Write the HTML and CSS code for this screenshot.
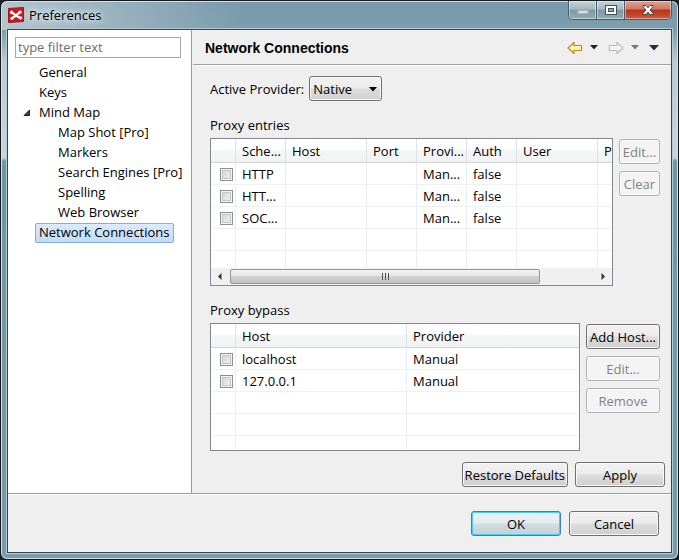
FILE: index.html
```html
<!DOCTYPE html>
<html lang="en">
<head>
<meta charset="utf-8">
<title>Preferences</title>
<link rel="stylesheet" href="styles.css">
</head>
<body>
<div class="window">
  <header class="titlebar">
    <svg class="logo" width="16" height="16" viewBox="0 0 16 16" aria-hidden="true">
      <path d="M0.500 1.500L15.500 0.500V14.500L0.500 15.500z" fill="#c8191e" stroke="#a81418"/>
      <path d="M2 5.500C5 5 6.500 7.500 8 8.500S11 11.500 14 10.500M2.500 11.500C5 11.500 6.500 9.500 8 8.500S10.500 5 13.500 5" fill="none" stroke="#fff" stroke-width="2.400"/>
      <path d="M3.500 3.500l1 2M11.500 3.500l0 2M4.500 13l0-2.500M12.500 12.500l-1-2" stroke="#fff" stroke-width="1.400"/>
    </svg>
    <h1 class="caption">Preferences</h1>
    <div class="controls">
      <button class="ctl" aria-label="Minimize" disabled><svg width="12" height="12" viewBox="0 0 12 12"><rect x="1" y="6.500" width="10" height="3" fill="#d9dfe2" stroke="#aab4b9"/></svg></button>
      <button class="ctl" aria-label="Maximize"><svg width="14" height="12" viewBox="0 0 14 12"><rect x="1.500" y="1.500" width="11" height="9" fill="#fff" stroke="#43505f"/><rect x="4.500" y="4.500" width="5" height="3" fill="#8faab7" stroke="#43505f"/></svg></button>
      <button class="ctl ctl-close" aria-label="Close"><svg width="14" height="12" viewBox="0 0 14 12"><path d="M2 1.500h3L7 3.800l2-2.300h3v1L9 6l3 3.500v1H9L7 8.200l-2 2.300H2v-1L5 6 2 2.500z" fill="#fff" stroke="#4a4450"/></svg></button>
    </div>
  </header>
  <main class="client">
    <div class="panes">
      <nav class="sidebar" aria-label="Preference pages">
        <input class="filter" type="text" placeholder="type filter text" aria-label="Filter">
        <ul class="tree">
          <li><a href="#">General</a></li>
          <li><a href="#">Keys</a></li>
          <li class="open">
            <svg class="twisty" width="8" height="8" viewBox="0 0 8 8" aria-hidden="true"><path d="M6.500 1v5.500H1z" fill="#404040" stroke="#202020"/></svg>
            <a href="#">Mind Map</a>
            <ul class="subtree">
              <li><a href="#">Map Shot [Pro]</a></li>
              <li><a href="#">Markers</a></li>
              <li><a href="#">Search Engines [Pro]</a></li>
              <li><a href="#">Spelling</a></li>
              <li><a href="#">Web Browser</a></li>
            </ul>
          </li>
          <li><a class="selected" href="#" aria-current="page">Network Connections</a></li>
        </ul>
      </nav>
      <section class="page">
        <div class="page-head">
          <h2>Network Connections</h2>
          <div class="tools">
            <button class="tool" aria-label="Back"><svg width="16" height="14" viewBox="0 0 16 14"><path d="M1 7l6-5.500v3h7.500v5H7v3z" fill="#fff3b8" stroke="#c08a10" stroke-width="1.200" stroke-linejoin="round"/></svg></button>
            <button class="tool" aria-label="Back history"><svg width="8" height="5" viewBox="0 0 8 5"><path d="M0 0h8L4 4.500z" fill="#222"/></svg></button>
            <button class="tool" aria-label="Forward"><svg width="16" height="14" viewBox="0 0 16 14"><path d="M15 7l-6-5.500v3H1.500v5H9v3z" fill="#f4f4f2" stroke="#bcbcba" stroke-width="1.200" stroke-linejoin="round"/></svg></button>
            <button class="tool" aria-label="Forward history"><svg width="8" height="5" viewBox="0 0 8 5"><path d="M0 0h8L4 4.500z" fill="#777"/></svg></button>
            <button class="tool" aria-label="Menu"><svg width="10" height="6" viewBox="0 0 10 6"><path d="M0 0h10L5 5.500z" fill="#2d2850"/></svg></button>
          </div>
        </div>
        <div class="page-body">
          <div class="provider">
            <label for="provider">Active Provider:</label>
            <span class="select"><select id="provider"><option>Native</option><option>Direct</option><option>Manual</option></select><svg width="8" height="5" viewBox="0 0 8 5" aria-hidden="true"><path d="M0 0h8L4 4.500z" fill="#000"/></svg></span>
          </div>
          <h3>Proxy entries</h3>
          <div class="group">
            <div class="grid entries">
              <div class="scroller">
              <table>
                <colgroup><col class="c-check"><col class="c-s"><col class="c-l"><col class="c-s"><col class="c-s"><col class="c-s"><col class="c-l"><col class="c-l"></colgroup>
                <thead><tr><th></th><th>Sche...</th><th>Host</th><th>Port</th><th>Provi...</th><th>Auth</th><th>User</th><th>P</th></tr></thead>
                <tbody>
                  <tr><td><input type="checkbox" aria-label="HTTP"></td><td>HTTP</td><td></td><td></td><td>Man...</td><td>false</td><td></td><td></td></tr>
                  <tr><td><input type="checkbox" aria-label="HTTPS"></td><td>HTT...</td><td></td><td></td><td>Man...</td><td>false</td><td></td><td></td></tr>
                  <tr><td><input type="checkbox" aria-label="SOCKS"></td><td>SOC...</td><td></td><td></td><td>Man...</td><td>false</td><td></td><td></td></tr>
                  <tr><td></td><td></td><td></td><td></td><td></td><td></td><td></td><td></td></tr>
                  <tr class="partial"><td></td><td></td><td></td><td></td><td></td><td></td><td></td><td></td></tr>
                </tbody>
              </table>
              </div>
              <div class="hscroll" aria-hidden="true">
                <svg width="17" height="17" viewBox="0 0 17 17"><path d="M10.500 5v7L7 8.500z" fill="#333"/></svg>
                <div class="track"><div class="thumb"><i></i><i></i><i></i></div></div>
                <svg width="17" height="17" viewBox="0 0 17 17"><path d="M6.500 5v7L10 8.500z" fill="#333"/></svg>
              </div>
            </div>
            <div class="stack narrow">
              <button class="btn" disabled>Edit...</button>
              <button class="btn" disabled>Clear</button>
            </div>
          </div>
          <h3>Proxy bypass</h3>
          <div class="group">
            <div class="grid">
              <table>
                <colgroup><col class="c-check"><col class="c-host"><col></colgroup>
                <thead><tr><th></th><th>Host</th><th>Provider</th></tr></thead>
                <tbody>
                  <tr><td><input type="checkbox" aria-label="localhost"></td><td>localhost</td><td>Manual</td></tr>
                  <tr><td><input type="checkbox" aria-label="127.0.0.1"></td><td>127.0.0.1</td><td>Manual</td></tr>
                  <tr><td></td><td></td><td></td></tr>
                  <tr><td></td><td></td><td></td></tr>
                  <tr class="partial short"><td></td><td></td><td></td></tr>
                </tbody>
              </table>
            </div>
            <div class="stack">
              <button class="btn">Add Host...</button>
              <button class="btn" disabled>Edit...</button>
              <button class="btn" disabled>Remove</button>
            </div>
          </div>
        </div>
        <div class="page-actions">
          <button class="btn restore">Restore Defaults</button>
          <button class="btn wide">Apply</button>
        </div>
      </section>
    </div>
    <footer class="dialog-actions">
      <button class="btn wide default">OK</button>
      <button class="btn wide">Cancel</button>
    </footer>
  </main>
</div>
</body>
</html>
```

FILE: styles.css
```css
* { box-sizing: border-box; }

html { background: #1c2226; }

body {
  margin: 0;
  font: 13px/20px "Open Sans", "Noto Sans", sans-serif;
  color: #000;
}

h1, h2, h3 { margin: 0; font-size: 13px; font-weight: 400; }

button, input, select { font: inherit; color: inherit; margin: 0; }

button { padding: 0; }

svg { display: block; flex: none; }

.window {
  min-height: 100vh;
  display: flex;
  flex-direction: column;
  padding: 0 6px 6px 5px;
  border: 1px solid #15191e;
  border-radius: 7px;
  background:
    linear-gradient(90deg, #b4c6cf 0, rgba(180, 198, 207, 0) 240px) 0 0 / 100% 29px no-repeat,
    linear-gradient(180deg, #779aad 0, #7d9dab 29px, #b9cbd5 60px, #c9d4dd 157px, #6f94a6 160px, #789bab 100%);
  box-shadow: inset 0 0 0 1px #d3e2e8;
}

.titlebar {
  display: flex;
  align-items: flex-start;
  height: 28px;
  padding-left: 2px;
}

.logo { margin-top: 6px; }

.caption { padding: 4px 0 0 5px; flex: 1; text-shadow: 0 0 6px #fff, 0 0 10px #fff; }

.controls {
  display: flex;
  border: 1px solid #4b5c66;
  border-top: 0;
  border-radius: 0 0 5px 5px;
  overflow: hidden;
}

.ctl {
  width: 28px;
  height: 18px;
  display: flex;
  align-items: center;
  justify-content: center;
  border: 0;
  border-right: 1px solid #4b5c66;
  background: linear-gradient(#c3d0d7, #a7b9c2 45%, #7f98a5 50%, #93aab5);
  box-shadow: inset 0 0 0 1px rgba(255, 255, 255, .45);
}

.ctl-close {
  width: 46px;
  border-right: 0;
  background: linear-gradient(#dfa193, #cf7765 45%, #b5321c 50%, #cc5a3c);
}

.client {
  flex: 1;
  display: flex;
  flex-direction: column;
  margin-left: 1px;
  background: #efefef;
  border: 1px solid #35464e;
  box-shadow: 0 0 0 1px #b5cbd4;
}

.panes { flex: 1; display: flex; border-bottom: 1px solid #9d9d9d; }

.sidebar {
  width: 184px;
  flex: none;
  padding: 7px 10px 0 7px;
  background: #fff;
  border-right: 1px solid #9a9a9a;
}

.filter {
  display: block;
  width: 100%;
  height: 21px;
  padding: 0 2px 1px;
  border: 1px solid #a6a6a6;
  background: #fff;
}

.filter::placeholder { color: #6d6d6d; opacity: 1; }

.tree, .subtree { list-style: none; margin: 0; padding: 0; }

.tree { padding: 5px 0 0 20px; }

.tree li { position: relative; }

.tree a {
  display: inline-block;
  height: 20px;
  padding: 0 3px;
  border: 1px solid transparent;
  line-height: 17px;
  color: inherit;
  text-decoration: none;
  vertical-align: top;
  white-space: nowrap;
}

.subtree { padding-left: 19px; }

.twisty { position: absolute; left: -12px; top: 6px; }

.tree .selected {
  border-color: #84acdd;
  border-radius: 2px;
  background: linear-gradient(#dcebfd, #c1dafb);
}

.page { flex: 1; min-width: 0; display: flex; flex-direction: column; }

.page-head {
  display: flex;
  align-items: center;
  justify-content: space-between;
  height: 35px;
  margin-left: 1px;
  padding: 1px 12px 0;
  border-bottom: 1px solid #a0a0a0;
  box-shadow: 0 1px 0 #fff;
}

.page-head h2 { font: bold 14px/20px "Liberation Sans", Arial, sans-serif; }

.tools { display: flex; align-items: center; }

.tool { display: flex; border: 0; background: none; }

.tool:nth-child(even) { margin: 0 10px 0 7px; }

.page-body { padding: 11px 11px 0 18px; }

.provider { display: flex; align-items: center; gap: 5px; }

.select { position: relative; }

.select select {
  display: block;
  width: 73px;
  height: 25px;
  padding: 0 3px;
  appearance: none;
  border: 1px solid #707070;
  border-radius: 3px;
  background: linear-gradient(#f2f2f2, #ebebeb 48%, #dddddd 52%, #cfcfcf);
  box-shadow: inset 0 0 0 1px #f8f8f8;
}

.select svg { position: absolute; right: 5px; top: 11px; pointer-events: none; }

h3 { padding: 14px 0 3px; }

.group { display: flex; align-items: flex-start; gap: 6px; }

.grid { flex: 1; min-width: 0; border: 1px solid #828790; background: #fff; }

.scroller { overflow: hidden; }

table { width: 100%; table-layout: fixed; border-collapse: separate; border-spacing: 0; }

.entries table { width: 468px; }

.c-check { width: 25px; }
.c-s { width: 50px; }
.c-l { width: 81px; }
.c-host { width: 171px; }

th, td {
  height: 22px;
  padding: 0 0 0 6px;
  border-right: 1px solid #ececf3;
  border-bottom: 1px solid #f0f0f4;
  font-weight: 400;
  line-height: 20px;
  text-align: left;
  white-space: nowrap;
}

th {
  height: 24px;
  border-right-color: #dfe1e6;
  border-bottom-color: #d5d5d5;
  background: linear-gradient(#fff 45%, #f5f6f8 50%, #f1f2f4);
}

tr > :first-child { padding-left: 9px; }

tr > :last-child { border-right: 0; }

.partial td { height: 17px; border-bottom: 0; }

.partial.short td { height: 14px; }

input[type="checkbox"] {
  display: block;
  width: 13px;
  height: 13px;
  margin-top: 2px;
  appearance: none;
  border: 1px solid #8e8f8f;
  background: linear-gradient(135deg, #cfd0d2, #f6f6f6);
  box-shadow: inset 0 0 0 1px #f4f4f4, inset 0 0 0 2px #c3c6ca;
}

.hscroll { display: flex; height: 17px; background: #f0f0f0; }

.track { flex: 1; padding: 1px 0; margin-left: 2px; }

.thumb {
  width: 85%;
  height: 15px;
  display: flex;
  align-items: center;
  justify-content: center;
  gap: 2px;
  border: 1px solid #979797;
  border-radius: 2px;
  background: linear-gradient(#f3f3f3, #e6e6e6 45%, #d2d2d2 50%, #c2c2c2);
}

.thumb i { width: 1px; height: 7px; background: #555; }

.stack { width: 74px; display: flex; flex-direction: column; gap: 7px; padding-top: 1px; }

.stack.narrow { width: 41px; }

.btn {
  height: 25px;
  padding: 0 2px;
  border: 1px solid #707070;
  border-radius: 3px;
  background: linear-gradient(#f2f2f2, #ebebeb 48%, #dddddd 52%, #cfcfcf);
  box-shadow: inset 0 0 0 1px #f8f8f8;
  line-height: 20px;
  white-space: nowrap;
}

.btn:disabled { border-color: #adb2b5; background: #f4f4f4; color: #838383; }

.wide { width: 90px; }

.restore { min-width: 106px; }

.default {
  border-color: #3c7fb1;
  background: linear-gradient(#eef3f5, #e3eaee 48%, #d3dde1 52%, #c6d0d4);
  box-shadow: inset 0 0 0 1px #45d0f8;
}

.page-actions {
  display: flex;
  justify-content: flex-end;
  gap: 7px;
  margin-top: auto;
  padding: 11px 6px 6px 18px;
}

.dialog-actions {
  display: flex;
  justify-content: flex-end;
  gap: 8px;
  padding: 16px 12px;
  border-top: 1px solid #fff;
}
```
